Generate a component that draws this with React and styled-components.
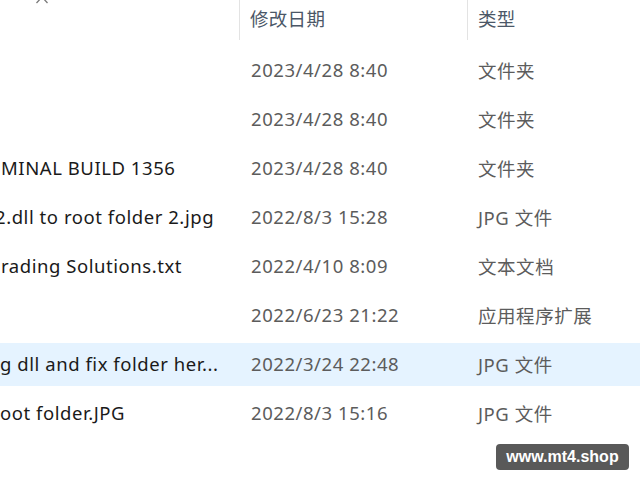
import styled, { createGlobalStyle } from "styled-components";

const Global = createGlobalStyle`
html,body{
    margin:0;
    padding:0;
    background:#fff;
    overflow:hidden;
}
body{
    width:640px;
    height:480px;
    font-family:"Noto Sans","Noto Sans CJK SC",sans-serif;
}
`;

const Page = styled.div`
position:relative;
width:640px;
height:480px;
overflow:hidden;
`;

const Table = styled.div`
margin-left:-156px;
display:flex;
flex-direction:column;
`;

const Header = styled.div`
display:grid;
grid-template-columns:395px 228px 1fr;
height:40px;
`;

const HeadCell = styled.div`
display:flex;
align-items:center;
padding:0 0 4px 10px;
font-size:18.5px;
letter-spacing:0.3px;
color:#4b5767;
border-left:${p => (p.$divider ? "1px solid #e3e3e3" : "none")};
`;

const SortCell = styled.div`
display:flex;
justify-content:center;
align-items:flex-start;
`;

const Chevron = styled.svg`
margin-top:-5px;
width:14px;
height:9px;
`;

const Rows = styled.div`
display:flex;
flex-direction:column;
gap:6px;
padding-top:9px;
`;

const Row = styled.div`
display:grid;
grid-template-columns:396px 228px 1fr;
align-items:center;
height:43px;
background:${p => (p.$selected ? "#e5f3ff" : "transparent")};
font-size:18.5px;
letter-spacing:0.55px;
`;

const Name = styled.div`
padding-left:${p => 156 + p.$shift}px;
padding-bottom:2px;
color:#1a1a1a;
white-space:nowrap;
overflow:hidden;
`;

const Cell = styled.div`
padding-left:${p => p.$pad}px;
padding-bottom:2px;
color:#5c5c5c;
white-space:nowrap;
`;

const Badge = styled.div`
position:absolute;
right:11px;
bottom:10px;
width:133px;
height:26px;
border-radius:4px;
background:#595959;
color:#fff;
font-family:"Liberation Sans",Arial,sans-serif;
font-weight:bold;
font-size:16px;
display:flex;
align-items:center;
justify-content:center;
`;

const files = [
    { name: "", shift: 0, date: "2023/4/28 8:40", type: "文件夹" },
    { name: "", shift: 0, date: "2023/4/28 8:40", type: "文件夹" },
    { name: "MINAL BUILD 1356", shift: 1, date: "2023/4/28 8:40", type: "文件夹" },
    { name: "2.dll to root folder 2.jpg", shift: -5, date: "2022/8/3 15:28", type: "JPG 文件" },
    { name: "rading Solutions.txt", shift: 1, date: "2022/4/10 8:09", type: "文本文档" },
    { name: "", shift: 0, date: "2022/6/23 21:22", type: "应用程序扩展" },
    { name: "g dll and fix folder her...", shift: 0, date: "2022/3/24 22:48", type: "JPG 文件", selected: true },
    { name: "oot folder.JPG", shift: 0, date: "2022/8/3 15:16", type: "JPG 文件" },
];

export default function App() {
    return (
        <Page>
            <Global />
            <Table>
                <Header>
                    <SortCell>
                        <Chevron viewBox="0 0 14 9">
                            <path d="M1.5 8 L7 2 L12.5 8" fill="none" stroke="#7a7a7a" strokeWidth="1.3" />
                        </Chevron>
                    </SortCell>
                    <HeadCell $divider>修改日期</HeadCell>
                    <HeadCell $divider>类型</HeadCell>
                </Header>
                <Rows>
                    {files.map((f, i) => (
                        <Row key={i} $selected={f.selected}>
                            <Name $shift={f.shift}>{f.name}</Name>
                            <Cell $pad={11}>{f.date}</Cell>
                            <Cell $pad={10}>{f.type}</Cell>
                        </Row>
                    ))}
                </Rows>
            </Table>
            <Badge>www.mt4.shop</Badge>
        </Page>
    );
}
